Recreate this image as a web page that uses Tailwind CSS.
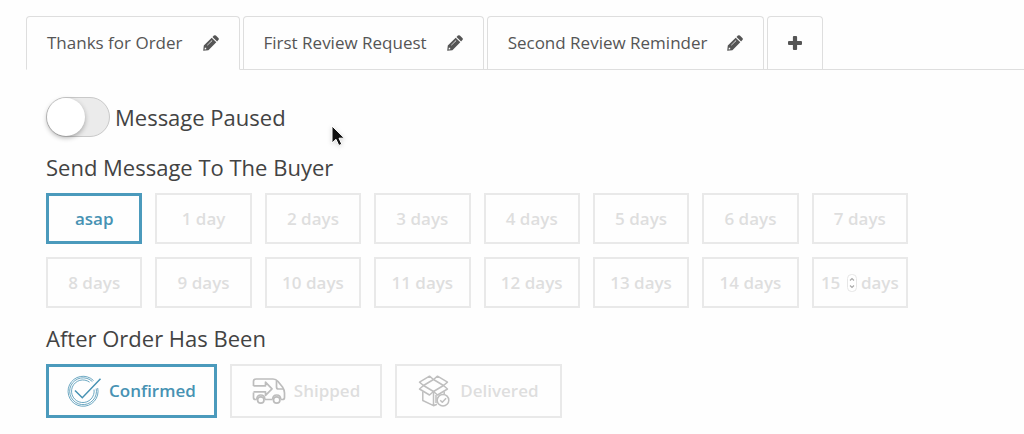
<!DOCTYPE html>
<html lang="en">
<head>
  <meta charset="UTF-8" />
  <meta name="viewport" content="width=device-width, initial-scale=1.0"/>
  <title>Message Settings</title>
  <script src="https://cdn.jsdelivr.net/npm/@tailwindcss/browser@4"></script>
</head>
<body class="bg-[#fefefe] min-h-screen pt-4 pl-[26px] relative overflow-x-hidden font-['Open_Sans',sans-serif] text-[#434343]">

  <!-- Shared icons -->
  <svg class="hidden" aria-hidden="true">
    <symbol id="pencil" viewBox="0 0 16 16">
      <path fill="currentColor" fill-rule="evenodd" d="M0.2 15.8 L0.8 10.6 L8.700 2.700 L13.300 7.300 L5.400 15.200 Z M1.8 12.8 L1.6 14.4 L3.2 14.2 L3.2 12.8 Z M4 10.2 L8.900 5.300 L9.300 5.700 L4.400 10.600 Z"/>
      <path fill="currentColor" d="M9.500 1.900 L10.900 0.600 Q11.900 -0.300 12.900 0.600 L15.400 3.100 Q16.300 4.100 15.400 5.100 L14.100 6.500 Z"/>
    </symbol>
  </svg>

  <!-- Tabs -->
  <nav class="flex h-[54px] text-[17px] text-[#555]">
    <button type="button" class="flex items-center gap-5 px-5 bg-[#fefefe] border border-[#dedede] border-b-[#fefefe] rounded-t whitespace-nowrap">
      Thanks for Order
      <svg class="size-4" aria-hidden="true"><use href="#pencil"/></svg>
    </button>
    <div class="flex flex-1 gap-[3px] pl-[3px] border-b border-[#dedede]">
      <button type="button" class="flex items-center gap-5 px-5 border border-b-0 border-[#dedede] rounded-t whitespace-nowrap">
        First Review Request
        <svg class="size-4" aria-hidden="true"><use href="#pencil"/></svg>
      </button>
      <button type="button" class="flex items-center gap-5 px-5 border border-b-0 border-[#dedede] rounded-t whitespace-nowrap">
        Second Review Reminder
        <svg class="size-4" aria-hidden="true"><use href="#pencil"/></svg>
      </button>
      <button type="button" aria-label="Add message" class="flex items-center px-5 border border-b-0 border-[#dedede] rounded-t">
        <svg class="size-[14px]" viewBox="0 0 14 14" aria-hidden="true"><path fill="currentColor" d="M5.9 0h2.2q1 0 1 1v3.9H13q1 0 1 1v2.2q0 1-1 1H9.1V13q0 1-1 1H5.9q-1 0-1-1V9.1H1q-1 0-1-1V5.9q0-1 1-1h3.9V1q0-1 1-1z"/></svg>
      </button>
    </div>
  </nav>

  <main class="pl-5 pt-[27px] pr-5">
    <!-- Pause switch -->
    <label class="flex items-center gap-[5px] h-10 text-[22px]">
      <input type="checkbox" class="appearance-none w-16 h-10 rounded-full border border-[#c9c9c9] bg-[#ebebeb] before:block before:size-[38px] before:rounded-full before:bg-white before:shadow-[0_2px_5px_rgba(0,0,0,0.3)] checked:before:ml-6">
      Message Paused
    </label>

    <!-- Delay -->
    <h2 class="mt-[14px] h-8 leading-8 text-[22px]">Send Message To The Buyer</h2>
    <div class="mt-[10px] grid grid-cols-8 gap-[13px] max-w-[862px] auto-rows-[51px] text-[17px] font-semibold text-[#dedede]">
      <button type="button" class="border-[3px] border-[#4b9abc] text-[#4792b3]">asap</button>
      <button type="button" class="border-2 border-[#e9e9e9]">1 day</button>
      <button type="button" class="border-2 border-[#e9e9e9]">2 days</button>
      <button type="button" class="border-2 border-[#e9e9e9]">3 days</button>
      <button type="button" class="border-2 border-[#e9e9e9]">4 days</button>
      <button type="button" class="border-2 border-[#e9e9e9]">5 days</button>
      <button type="button" class="border-2 border-[#e9e9e9]">6 days</button>
      <button type="button" class="border-2 border-[#e9e9e9]">7 days</button>
      <button type="button" class="border-2 border-[#e9e9e9]">8 days</button>
      <button type="button" class="border-2 border-[#e9e9e9]">9 days</button>
      <button type="button" class="border-2 border-[#e9e9e9]">10 days</button>
      <button type="button" class="border-2 border-[#e9e9e9]">11 days</button>
      <button type="button" class="border-2 border-[#e9e9e9]">12 days</button>
      <button type="button" class="border-2 border-[#e9e9e9]">13 days</button>
      <button type="button" class="border-2 border-[#e9e9e9]">14 days</button>
      <label class="flex items-center justify-center border-2 border-[#e9e9e9]">
        <input type="number" value="15" class="w-[26px] [appearance:textfield] [&::-webkit-inner-spin-button]:appearance-none [&::-webkit-inner-spin-button]:m-0">
        <svg class="w-[10px] h-[18px] mr-1" viewBox="0 0 10 18" fill="none" aria-hidden="true">
          <rect x="0.5" y="0.5" width="9" height="17" rx="4" fill="#fff" stroke="#e6e6e6"/>
          <path d="M3 6.5L5 4.5l2 2M3 11.5l2 2 2-2" stroke="#aaa" stroke-width="1.2"/>
        </svg>
        days
      </label>
    </div>

    <!-- Order state -->
    <h2 class="mt-[14px] h-8 leading-8 text-[22px]">After Order Has Been</h2>
    <div class="mt-[10px] flex gap-[13px] h-[54px] text-[17px] font-semibold text-[#dedede]">
      <button type="button" class="flex items-center gap-[10px] px-[18px] border-[3px] border-[#4b9abc] text-[#4792b3]">
        <svg class="size-8 overflow-visible" viewBox="0 0 32 32" fill="none" stroke="currentColor" stroke-width="0.800" aria-hidden="true">
          <path d="M26.500 5.500A15 15 0 1 0 30.700 13"/>
          <path d="M25.400 6.600A13.400 13.400 0 1 0 29.200 13.500"/>
          <path d="M22.600 7.200A11.300 11.300 0 1 0 27 14.500"/>
          <path d="M8 15.500l7.300 7.300L33.500 3.800" stroke="#fefefe" stroke-width="4"/>
          <path d="M8 15.500l7.300 7.300L33.500 3.800" stroke-width="1.500"/>
        </svg>
        Confirmed
      </button>
      <button type="button" class="flex items-center gap-2 px-5 border-2 border-[#e9e9e9]">
        <svg class="w-[34px] h-7 text-[#bdbdbd]" viewBox="0 0 34 28" fill="none" stroke="currentColor" stroke-width="1.700" stroke-linejoin="round" aria-hidden="true">
          <path d="M1.500 9V4.500Q1.500 2 4 2H21q3 0 5 2.500l4.500 5.500q2 3 2 6v4.500q0 2-2 2h-1.800"/>
          <path d="M20.700 22.500h-8M4.800 22.500H3.500Q1.500 22.500 1.500 20.500V15.500"/>
          <path d="M1.500 8.800h12V5.200l6.500 6.600-6.500 6.600v-3.600h-12"/>
          <path d="M24.500 3.500v6.500q0 2 2 2h4.800"/>
          <path d="M4.800 22q.2-4 4-4t4 4M20.700 22q.2-4 4-4t4 4"/>
          <circle cx="8.800" cy="23" r="3.200"/>
          <circle cx="24.700" cy="23" r="3.200"/>
        </svg>
        Shipped
      </button>
      <button type="button" class="flex items-center gap-[10px] px-[21px] border-2 border-[#e9e9e9]">
        <svg class="size-8 text-[#bfbfbf]" viewBox="0 0 32 32" fill="none" stroke="currentColor" stroke-width="1.500" stroke-linejoin="round" aria-hidden="true">
          <path d="M5.500 10.500L1.500 7.200 11.500 1.200l4 3.300zM15.500 4.500l4-3.300 10 6-4 3.300z"/>
          <path d="M5.500 10.500L1.500 14l10 6 4-3.500zM25.500 10.500l4 3.500-10 6-4-3.500z"/>
          <path d="M4.800 16.500v9l10.700 5.200V17M15.500 30.700l3.500-1.500M26.200 16.500v2.500M18 20v8"/>
          <circle cx="25" cy="25.200" r="5.800" fill="#fefefe"/>
          <path d="M22.200 25.200l2.100 2.100 3.800-4.100"/>
        </svg>
        Delivered
      </button>
    </div>
  </main>

  <!-- Mouse pointer -->
  <svg class="absolute left-[330px] top-[124px] w-4 h-6 drop-shadow-sm" viewBox="0 0 16 24" aria-hidden="true">
    <path d="M2 2v17l4-3.700 2.800 6.200 3-1.300-2.800-6h5.400z" fill="#111" stroke="#fff" stroke-width="1"/>
  </svg>
</body>
</html>
